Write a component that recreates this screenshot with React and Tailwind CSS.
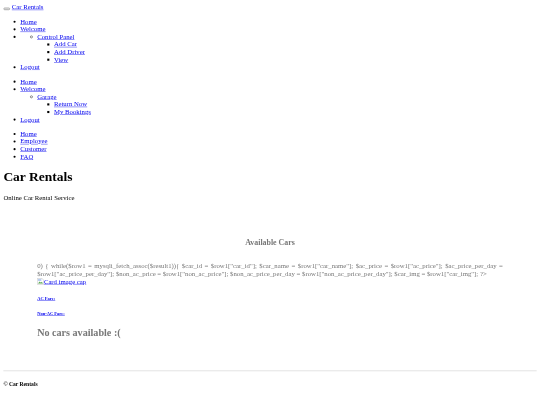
const link = "text-[#0000ee] underline";
const d1 = "list-disc pl-10";
const d2 = "list-[circle] pl-10";
const d3 = "list-[square] pl-10";

function Item({ children }) {
  return <li><a href="#" className={link}>{children}</a></li>;
}

export default function App() {
  return (
    <div className="w-[540px] h-[405px] overflow-hidden bg-white blur-[0.4px]">
      <div className="w-[1280px] h-[960px] origin-top-left scale-[0.421875] p-2 bg-white text-black text-base [line-height:normal] [font-family:'Liberation_Serif',serif]">
        <div>
          <button className="inline-block w-4 h-1.5 bg-[#efefef] border-2 border-[#a0a0a0] rounded-[3px]" />{" "}
          <a href="#" className={link}>Car Rentals</a>
        </div>

        <ul className={`${d1} my-4`}>
          <Item>Home</Item>
          <Item>Welcome</Item>
          <li>
            <ul className={d2}>
              <li>
                <a href="#" className={link}>Control Panel</a>
                <ul className={d3}>
                  <Item>Add Car</Item>
                  <Item>Add Driver</Item>
                  <Item>View</Item>
                </ul>
              </li>
            </ul>
          </li>
          <Item>Logout</Item>
        </ul>

        <ul className={`${d1} my-4`}>
          <Item>Home</Item>
          <li>
            <a href="#" className={link}>Welcome</a>
            <ul className={d2}>
              <li>
                <a href="#" className={link}>Garage</a>
                <ul className={d3}>
                  <Item>Return Now</Item>
                  <Item>My Bookings</Item>
                </ul>
              </li>
            </ul>
          </li>
          <Item>Logout</Item>
        </ul>

        <ul className={`${d1} my-4`}>
          <Item>Home</Item>
          <Item>Employee</Item>
          <Item>Customer</Item>
          <Item>FAQ</Item>
        </ul>

        <h1 className="text-[32px] font-bold my-[21.44px]">Car Rentals</h1>
        <p className="my-4">Online Car Rental Service</p>

        <h3 className="mt-[85px] text-center text-[#777777] text-[18.72px] font-bold">Available Cars</h3>

        <div className="mt-[37px] mx-20 text-[#777777]">
          <p className="text-justify">
            0) {"{"} while($row1 = mysqli_fetch_assoc($result1)){"{"} $car_id = $row1["car_id"]; $car_name = $row1["car_name"]; $ac_price = $row1["ac_price"]; $ac_price_per_day = $row1["ac_price_per_day"]; $non_ac_price = $row1["non_ac_price"]; $non_ac_price_per_day = $row1["non_ac_price_per_day"]; $car_img = $row1["car_img"]; ?&gt;
          </p>
          <a href="#" className={link}>
            <svg width="16" height="16" viewBox="0 0 16 16" className="inline align-[-3px]">
              <path d="M0.5 0.5H11L15.5 5V15.5H0.5Z" fill="#fff" stroke="#9a9a9a" />
              <path d="M2 13L6 8L9 11L11 9L14 13Z" fill="#5aa84f" />
              <rect x="2" y="2" width="8" height="5" fill="#b8cdf0" />
            </svg>
            Card image cap
          </a>
          <h6 className="mt-[25px] text-[10.72px] font-bold"><a href="#" className={link}>AC Fare:</a></h6>
          <h6 className="mt-[24px] text-[10.72px] font-bold"><a href="#" className={link}>Non-AC Fare:</a></h6>
          <h2 className="mt-[23px] text-2xl font-bold">No cars available :(</h2>
        </div>

        <hr className="mt-[74px] border-t-2 border-[#dddddd]" />
        <h5 className="mt-[22px] text-[13.28px] font-bold">© Car Rentals</h5>
      </div>
    </div>
  );
}
